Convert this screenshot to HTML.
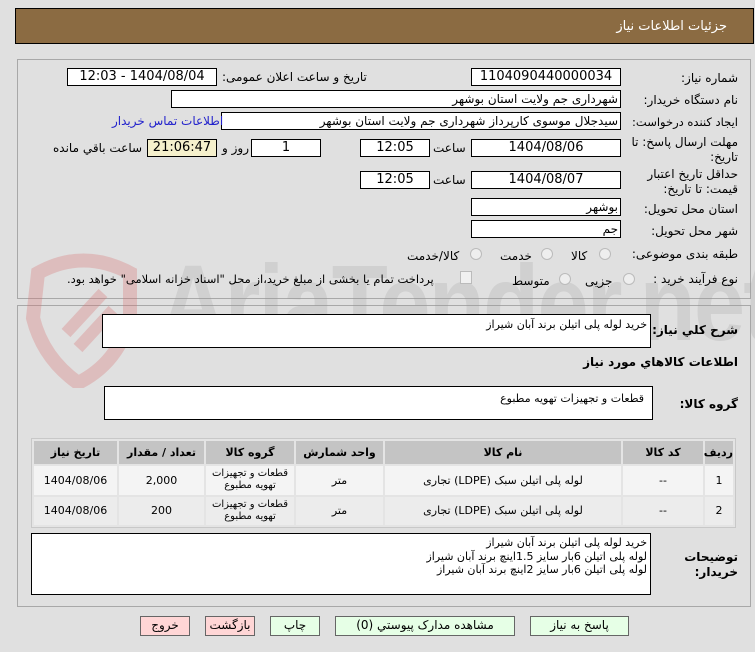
<!DOCTYPE html>
<html><head><meta charset="utf-8">
<style>
*{box-sizing:border-box;margin:0;padding:0}
body{width:755px;height:652px;background:#e0e0e0;font-family:Tahoma,"DejaVu Sans","Liberation Sans",sans-serif;font-size:12px;color:#000;position:relative;overflow:hidden;direction:rtl}
.a{position:absolute}
.hdr{left:15px;top:8px;width:739px;height:36px;background:#8b6b42;border:1px solid #000}
.hdr span{position:absolute;right:26px;top:10px;color:#fff;font-size:13px}
.panel{border:1px solid #a8a8a8;background:#e0e0e0}
.box{position:absolute;background:#fff;border:1px solid #000;height:18px;font-size:13px;line-height:16px;text-align:center;white-space:nowrap;overflow:hidden}
.r{text-align:right;padding-right:2px;font-size:12px}
.lbl{position:absolute;font-size:12px;white-space:nowrap;line-height:16px}
.radio{position:absolute;width:12px;height:12px;border-radius:50%;border:1px solid #bbb;background:#eee}
table{position:absolute;left:31px;top:438px;width:705px;height:90px;border:1px solid #c8c8c8;border-spacing:2px;background:#e4e4e4;direction:rtl;table-layout:fixed}
th{background:#c4c4c4;font-size:11px;height:23px;font-weight:bold}
td{text-align:center;font-size:11px;line-height:13px;height:28px;overflow:hidden}
td.gp{font-size:10px;line-height:12px}
tr.r1 td{background:#f4f4f4}
tr.r2 td{background:#ececec}
.btn{position:absolute;top:616px;height:20px;border:1px solid #666;font-size:12px;line-height:17px;text-align:center}
.g{background:#e6ffe6}.p{background:#ffd6d6}
.ta{position:absolute;background:#fff;border:1px solid #000;font-size:11px;padding:2px 3px;line-height:16px;text-align:right}
</style></head><body>
<div class="a hdr"><span>جزئیات اطلاعات نیاز</span></div>

<div class="a panel" style="left:17px;top:59px;width:734px;height:240px"></div>
<div class="a panel" style="left:17px;top:305px;width:734px;height:302px"></div>

<!-- watermark -->
<svg class="a" style="left:18px;top:248px" width="135" height="140" viewBox="0 0 135 140">
<path d="M20 25 Q65 0 112 25 L112 70 Q100 115 60 135 Q25 110 15 70 Z" fill="none" stroke="rgba(215,110,110,0.3)" stroke-width="14"/>
<path d="M48 85 L85 45 M60 100 L95 62" stroke="rgba(215,110,110,0.3)" stroke-width="12"/>
</svg>
<div class="a" style="left:160px;top:240px;font-size:108px;font-weight:bold;color:rgba(150,150,150,0.22);direction:ltr;font-family:'Liberation Sans',sans-serif;letter-spacing:-2px;transform:scaleX(0.85);transform-origin:left">AriaTender.net</div>

<!-- row 1 -->
<div class="lbl" style="right:17px;top:70px">شماره نیاز:</div>
<div class="box" style="left:471px;top:68px;width:150px">1104090440000034</div>
<div class="lbl" style="left:222px;top:69px">تاریخ و ساعت اعلان عمومی:</div>
<div class="box" style="left:67px;top:68px;width:150px">1404/08/04 - 12:03</div>
<!-- row 2 -->
<div class="lbl" style="right:17px;top:92px">نام دستگاه خریدار:</div>
<div class="box r" style="left:171px;top:90px;width:450px">شهرداری جم ولایت استان بوشهر</div>
<!-- row 3 -->
<div class="lbl" style="right:17px;top:114px;font-size:11.5px">ایجاد کننده درخواست:</div>
<div class="box r" style="left:221px;top:112px;width:400px">سیدجلال موسوی کارپرداز شهرداری جم ولایت استان بوشهر</div>
<div class="lbl" style="left:112px;top:113px;color:#2222cc">اطلاعات تماس خریدار</div>
<!-- row 4 -->
<div class="lbl" style="right:17px;top:135px;line-height:15px">مهلت ارسال پاسخ: تا<br>تاریخ:</div>
<div class="box" style="left:471px;top:139px;width:150px">1404/08/06</div>
<div class="lbl" style="left:433px;top:140px">ساعت</div>
<div class="box" style="left:360px;top:139px;width:70px">12:05</div>
<div class="box" style="left:251px;top:139px;width:70px">1</div>
<div class="lbl" style="left:222px;top:140px">روز و</div>
<div class="box" style="left:147px;top:139px;width:70px;background:#f5f0cc">21:06:47</div>
<div class="lbl" style="left:53px;top:140px">ساعت باقي مانده</div>
<!-- row 5 -->
<div class="lbl" style="right:17px;top:167px;line-height:15px">حداقل تاریخ اعتبار<br>قیمت: تا تاریخ:</div>
<div class="box" style="left:471px;top:171px;width:150px">1404/08/07</div>
<div class="lbl" style="left:433px;top:172px">ساعت</div>
<div class="box" style="left:360px;top:171px;width:70px">12:05</div>
<!-- row 6,7 -->
<div class="lbl" style="right:17px;top:201px">استان محل تحویل:</div>
<div class="box r" style="left:471px;top:198px;width:150px">بوشهر</div>
<div class="lbl" style="right:17px;top:223px">شهر محل تحویل:</div>
<div class="box r" style="left:471px;top:220px;width:150px">جم</div>
<!-- row 8 -->
<div class="lbl" style="right:17px;top:246px">طبقه بندی موضوعی:</div>
<div class="radio" style="left:599px;top:248px"></div><div class="lbl" style="left:571px;top:248px">کالا</div>
<div class="radio" style="left:541px;top:248px"></div><div class="lbl" style="left:500px;top:248px">خدمت</div>
<div class="radio" style="left:470px;top:248px"></div><div class="lbl" style="left:407px;top:248px">کالا/خدمت</div>
<!-- row 9 -->
<div class="lbl" style="right:17px;top:271px">نوع فرآیند خرید :</div>
<div class="radio" style="left:623px;top:273px"></div><div class="lbl" style="left:585px;top:273px">جزیی</div>
<div class="radio" style="left:559px;top:273px"></div><div class="lbl" style="left:512px;top:273px">متوسط</div>
<div class="a" style="left:460px;top:271px;width:12px;height:13px;border:1px solid #bbb;background:#f0f0f0"></div>
<div class="lbl" style="left:67px;top:271px;font-size:11.5px">پرداخت تمام یا بخشی از مبلغ خرید،از محل "اسناد خزانه اسلامی" خواهد بود.</div>

<!-- panel 2 -->
<div class="lbl" style="right:17px;top:322px;font-weight:bold">شرح كلي نياز:</div>
<div class="ta" style="left:102px;top:314px;width:549px;height:34px">خرید لوله پلی اتیلن برند آبان شیراز</div>
<div class="lbl" style="right:17px;top:354px;font-weight:bold">اطلاعات كالاهاي مورد نياز</div>
<div class="lbl" style="right:17px;top:396px;font-weight:bold">گروه کالا:</div>
<div class="ta" style="left:104px;top:386px;width:549px;height:34px;padding-right:8px;padding-top:4px">قطعات و تجهیزات تهویه مطبوع</div>

<table>
<tr><th style="width:28px">رديف</th><th style="width:80px">کد کالا</th><th style="width:236px">نام کالا</th><th style="width:87px">واحد شمارش</th><th style="width:88px">گروه کالا</th><th style="width:85px">تعداد / مقدار</th><th>تاریخ نیاز</th></tr>
<tr class="r1"><td>1</td><td>--</td><td>لوله پلی اتیلن سبک (LDPE) تجاری</td><td>متر</td><td class="gp">قطعات و تجهیزات<br>تهویه مطبوع</td><td>2,000</td><td>1404/08/06</td></tr>
<tr class="r2"><td>2</td><td>--</td><td>لوله پلی اتیلن سبک (LDPE) تجاری</td><td>متر</td><td class="gp">قطعات و تجهیزات<br>تهویه مطبوع</td><td>200</td><td>1404/08/06</td></tr>
</table>

<div class="lbl" style="right:17px;top:550px;font-weight:bold;line-height:15px">توضیحات<br>خریدار:</div>
<div class="ta" style="left:31px;top:533px;width:620px;height:62px;line-height:13.5px">خرید لوله پلی اتیلن برند آبان شیراز<br>لوله پلی اتیلن 6بار سایز 1.5اینچ برند آبان شیراز<br>لوله پلی اتیلن 6بار سایز 2اینچ برند آبان شیراز</div>

<div class="btn g" style="left:530px;width:99px">پاسخ به نیاز</div>
<div class="btn g" style="left:335px;width:180px">مشاهده مدارک پیوستي (0)</div>
<div class="btn g" style="left:270px;width:50px">چاپ</div>
<div class="btn p" style="left:205px;width:50px">بازگشت</div>
<div class="btn p" style="left:140px;width:50px">خروج</div>
</body></html>
